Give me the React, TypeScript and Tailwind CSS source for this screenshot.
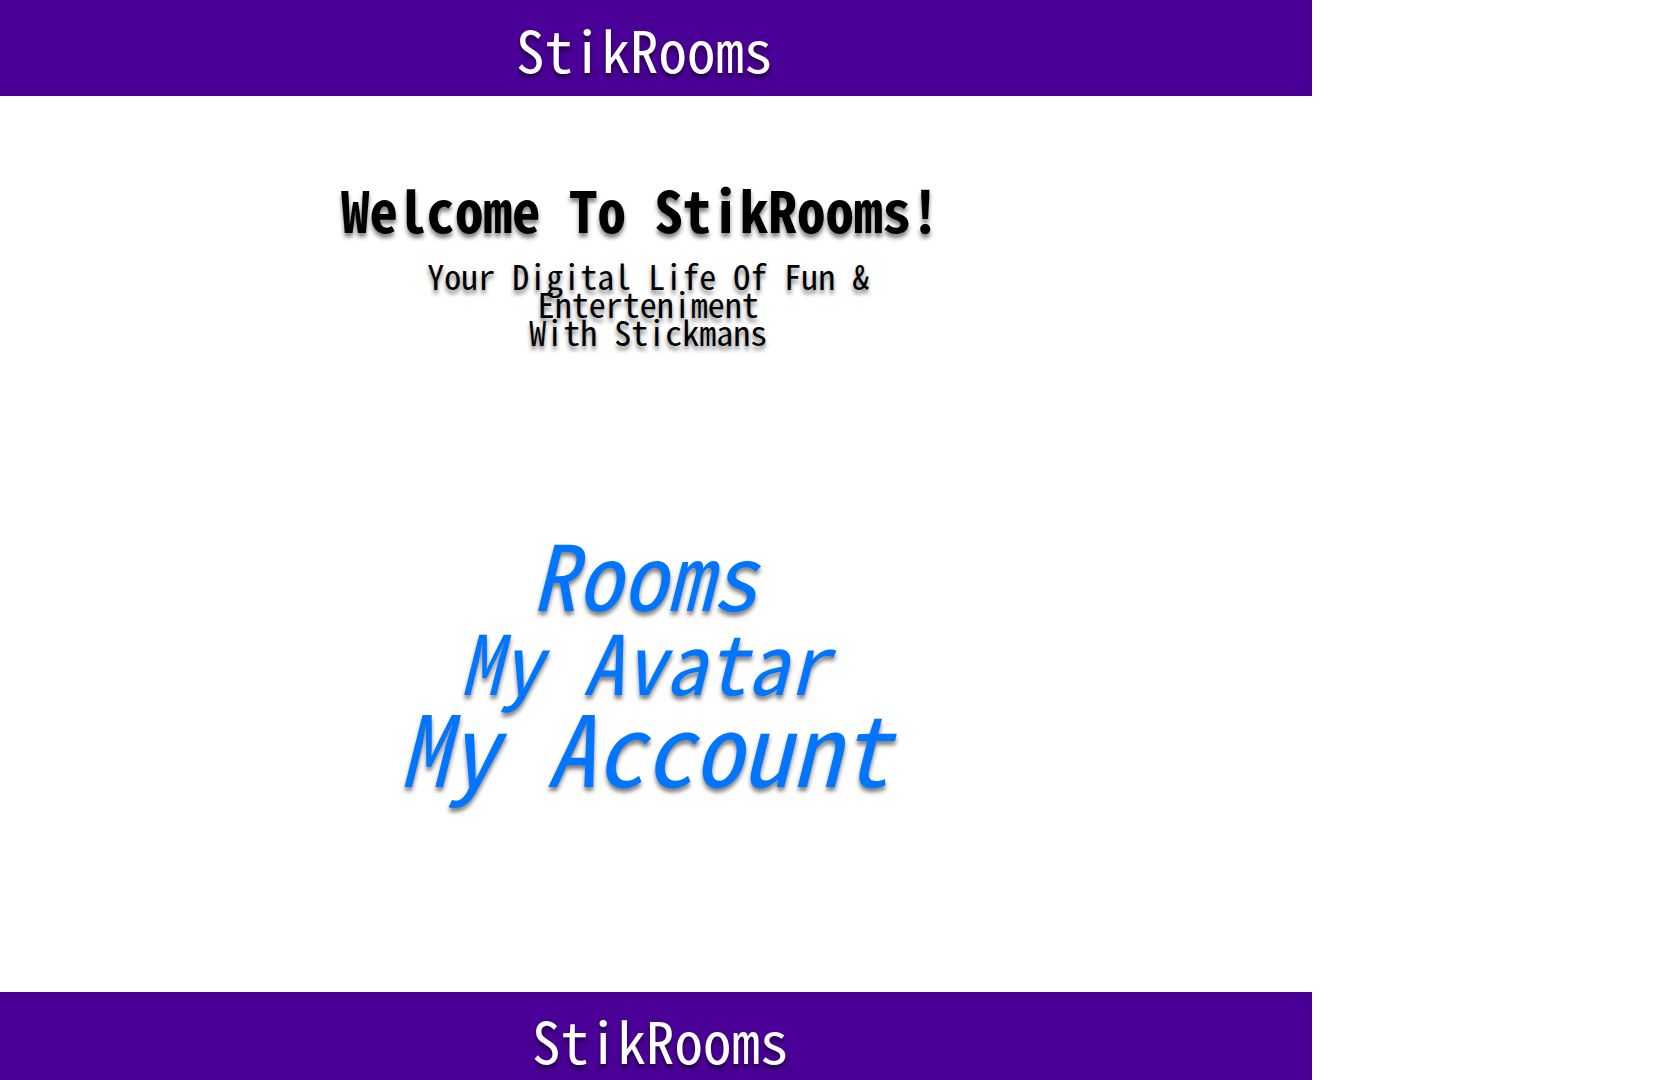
import React from 'react';

interface NavItem {
  label: string;
  href: string;
  className: string;
}

const navItems: NavItem[] = [
  { label: 'Rooms', href: '#rooms', className: 'text-[90px] leading-[92px]' },
  { label: 'My Avatar', href: '#avatar', className: 'text-[82px] leading-[84px]' },
  { label: 'My Account', href: '#account', className: 'text-[98px] leading-[84px]' },
];

export default function App() {
  return (
    <div className="flex min-h-screen flex-col bg-white font-['Noto_Sans_Mono_CJK_JP','Liberation_Mono',monospace] [text-shadow:0_4px_4px_rgba(0,0,0,0.5)]">
      <header className="flex h-24 w-[78.3%] items-center justify-center bg-[#4a0096] pr-6">
        <a href="#home" className="text-[57px] leading-[88px] text-white">StikRooms</a>
      </header>

      <main className="flex w-[78.3%] flex-1 flex-col items-center pr-4 pt-19 text-center">
        <h1 className="pr-4 text-[57px] font-bold leading-[72px] text-black">Welcome To StikRooms!</h1>
        <p className="mt-[18px] text-[34px] leading-7 text-black">
          Your Digital Life Of Fun &amp;
          <br />
          Enterteniment
          <br />
          With Stickmans
        </p>

        <nav className="mt-45 flex flex-col items-center pr-2 italic text-[#0075ff]">
          {navItems.map((item) => (
            <a key={item.href} href={item.href} className={item.className}>
              {item.label}
            </a>
          ))}
        </nav>
      </main>

      <footer className="flex h-[88px] w-[78.3%] items-center justify-center bg-[#4a0096] pl-2 pt-1.5">
        <span className="text-[57px] leading-[82px] text-white">StikRooms</span>
      </footer>
    </div>
  );
}
